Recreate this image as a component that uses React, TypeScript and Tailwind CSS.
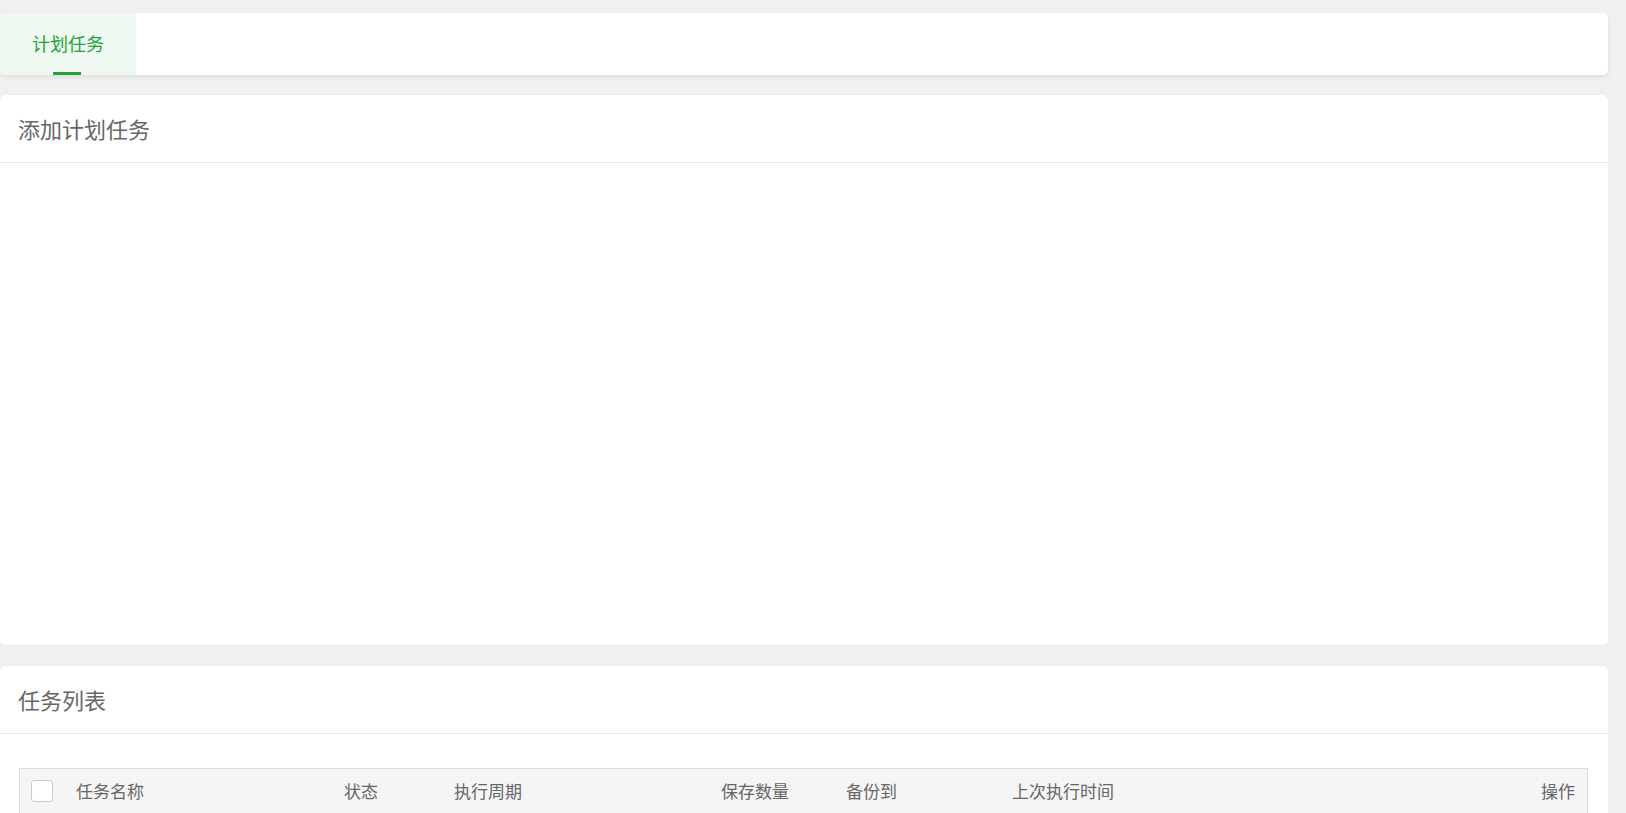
export default function App() {
  const cols = [
    { label: "任务名称", w: "w-[268px]" },
    { label: "状态", w: "w-[110px]" },
    { label: "执行周期", w: "w-[267px]" },
    { label: "保存数量", w: "w-[125px]" },
    { label: "备份到", w: "w-[166px]" },
    { label: "上次执行时间", w: "flex-1" },
  ];

  return (
    <div
      className="min-h-screen bg-[#f0f0f0] pt-[13px] pr-[18px]"
      style={{ fontFamily: '"Noto Sans CJK SC", "Noto Sans", sans-serif' }}
    >
      {/* tab bar */}
      <div className="h-[62px] bg-white rounded-[5px] shadow-[0_2px_4px_rgba(0,0,0,0.08)] flex overflow-hidden">
        <div className="relative w-[136px] h-full bg-[#eff8f1] flex items-center justify-center">
          <span className="text-[18px] text-[#20a53a] -mt-[2px]">计划任务</span>
          <div className="absolute bottom-0 left-[53px] w-[28px] h-[3px] bg-[#20a53a]" />
        </div>
      </div>

      {/* add task card */}
      <div className="mt-[20px] h-[550px] bg-white rounded-[5px] shadow-[0_0_1px_rgba(0,0,0,0.12)] flex flex-col">
        <div className="h-[68px] border-b border-[#e9e9e9] flex items-center px-[18px]">
          <h2 className="text-[22px] text-[#666]">添加计划任务</h2>
        </div>
        <div className="flex-1" />
      </div>

      {/* task list card */}
      <div className="mt-[21px] bg-white rounded-t-[5px] shadow-[0_0_1px_rgba(0,0,0,0.12)]">
        <div className="h-[68px] border-b border-[#e9e9e9] flex items-center px-[18px]">
          <h2 className="text-[22px] text-[#666]">任务列表</h2>
        </div>
        <div className="pt-[34px] pl-[19px] pr-[20px] pb-4">
          <div className="border border-[#dddddd] bg-[#f5f5f5] h-[46px] flex items-center pl-[11px] pr-[12px] text-[17px] text-[#666]">
            <div className="w-[45px] flex items-center">
              <div className="w-[22px] h-[22px] bg-white border border-[#cccccc] rounded-[3px]" />
            </div>
            {cols.map((c) => (
              <div key={c.label} className={c.w}>
                {c.label}
              </div>
            ))}
            <div className="text-right">操作</div>
          </div>
        </div>
      </div>
    </div>
  );
}
